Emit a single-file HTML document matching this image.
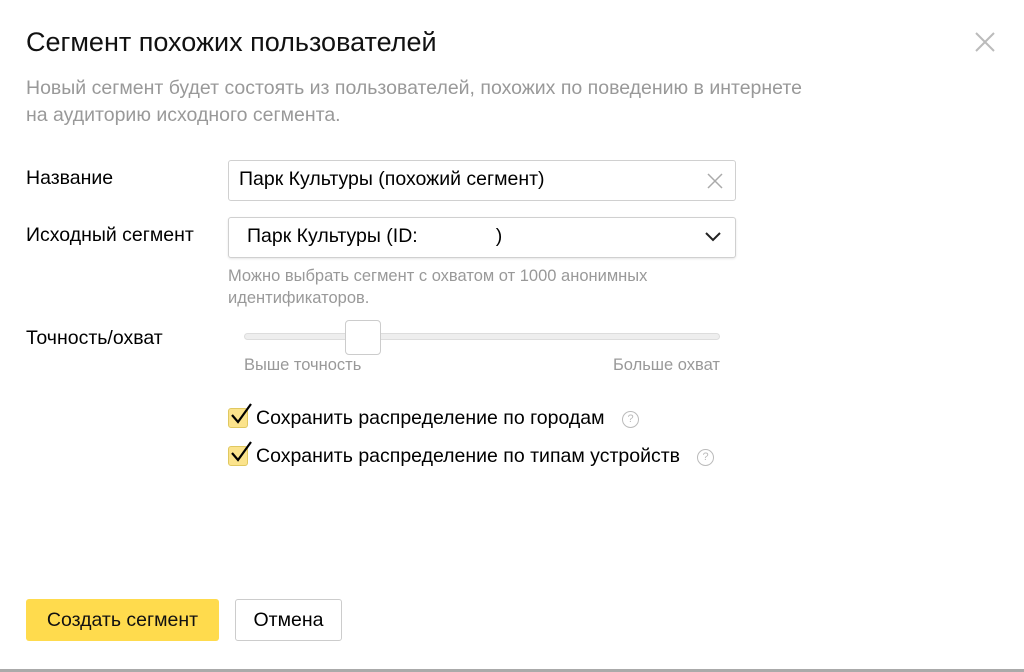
<!DOCTYPE html><html><head><meta charset="utf-8"><style>
body{margin:0;width:1024px;height:672px;background:#fff;font-family:"Liberation Sans",sans-serif;color:#000;position:relative;overflow:hidden}
.a{position:absolute;white-space:nowrap}
.lbl{font-size:19.5px;left:26px}
.box{position:absolute;border:1px solid #d0d0d0;border-radius:3px;background:#fff;box-sizing:border-box}
.cb{position:absolute;left:228px;width:20px;height:20px;background:#fbe38c;border:1px solid #e0c860;border-radius:3px;box-sizing:border-box}
.q{position:absolute;width:15px;height:15px;border:1px solid #bbb;border-radius:50%;font-size:11px;color:#bbb;text-align:center;line-height:15px}
</style></head><body>
<div class="a" style="left:26px;top:27px;font-size:27px;color:#111">Сегмент похожих пользователей</div>
<svg class="a" style="left:974px;top:31px" width="22" height="22"><path d="M2 2L20 20M20 2L2 20" stroke="#bbb" stroke-width="2"/></svg>
<div class="a" style="left:26px;top:75px;font-size:19.5px;color:#999;line-height:27px;white-space:normal;width:900px">Новый сегмент будет состоять из пользователей, похожих по поведению в интернете<br>на аудиторию исходного сегмента.</div>
<div class="a lbl" style="top:167px">Название</div>
<div class="box" style="left:228px;top:160px;width:508px;height:41px"></div>
<div class="a" style="left:239px;top:168px;font-size:19.5px">Парк Культуры (похожий сегмент)</div>
<svg class="a" style="left:707px;top:173px" width="16" height="16"><path d="M1 1L15 15M15 1L1 15" stroke="#aaa" stroke-width="1.5"/></svg>
<div class="a lbl" style="top:224px">Исходный сегмент</div>
<div class="box" style="left:228px;top:217px;width:508px;height:41px;box-shadow:0 1px 2px rgba(0,0,0,.1)"></div>
<div class="a" style="left:247px;top:225px;font-size:19.5px">Парк Культуры (ID:<span style="display:inline-block;width:78px"></span>)</div>
<svg class="a" style="left:704px;top:231px" width="18" height="12"><path d="M2 2L9 9L16 2" stroke="#222" stroke-width="2" fill="none"/></svg>
<div class="a" style="left:228px;top:265px;font-size:16.5px;color:#999;line-height:22px">Можно выбрать сегмент с охватом от 1000 анонимных<br>идентификаторов.</div>
<div class="a lbl" style="top:327px">Точность/охват</div>
<div class="a" style="left:244px;top:333px;width:476px;height:7px;background:#eee;border:1px solid #ddd;border-radius:4px;box-sizing:border-box"></div>
<div class="a" style="left:345px;top:320px;width:36px;height:35px;background:#fff;border:1px solid #ccc;border-radius:4px;box-sizing:border-box"></div>
<div class="a" style="left:244px;top:356px;font-size:16.5px;color:#999">Выше точность</div>
<div class="a" style="right:304px;top:356px;font-size:16.5px;color:#999">Больше охват</div>
<div class="cb" style="top:408px"></div>
<svg class="a" style="left:229px;top:402px" width="24" height="24"><path d="M3 13L9 20L22 2" stroke="#000" stroke-width="2.2" fill="none"/></svg>
<div class="a" style="left:256px;top:407px;font-size:19.5px">Сохранить распределение по городам</div>
<div class="q" style="left:622px;top:411px">?</div>
<div class="cb" style="top:446px"></div>
<svg class="a" style="left:229px;top:440px" width="24" height="24"><path d="M3 13L9 20L22 2" stroke="#000" stroke-width="2.2" fill="none"/></svg>
<div class="a" style="left:256px;top:445px;font-size:19.5px">Сохранить распределение по типам устройств</div>
<div class="q" style="left:697px;top:449px">?</div>
<div class="a" style="left:26px;top:599px;width:193px;height:42px;background:#ffdb4d;border-radius:3px;font-size:19.5px;text-align:center;line-height:42px;color:#111">Создать сегмент</div>
<div class="a" style="left:235px;top:599px;width:107px;height:42px;border:1px solid #ccc;border-radius:3px;box-sizing:border-box;font-size:19.5px;text-align:center;line-height:40px">Отмена</div>
<div class="a" style="left:0;top:669px;width:1024px;height:3px;background:#aaa"></div>
</body></html>
